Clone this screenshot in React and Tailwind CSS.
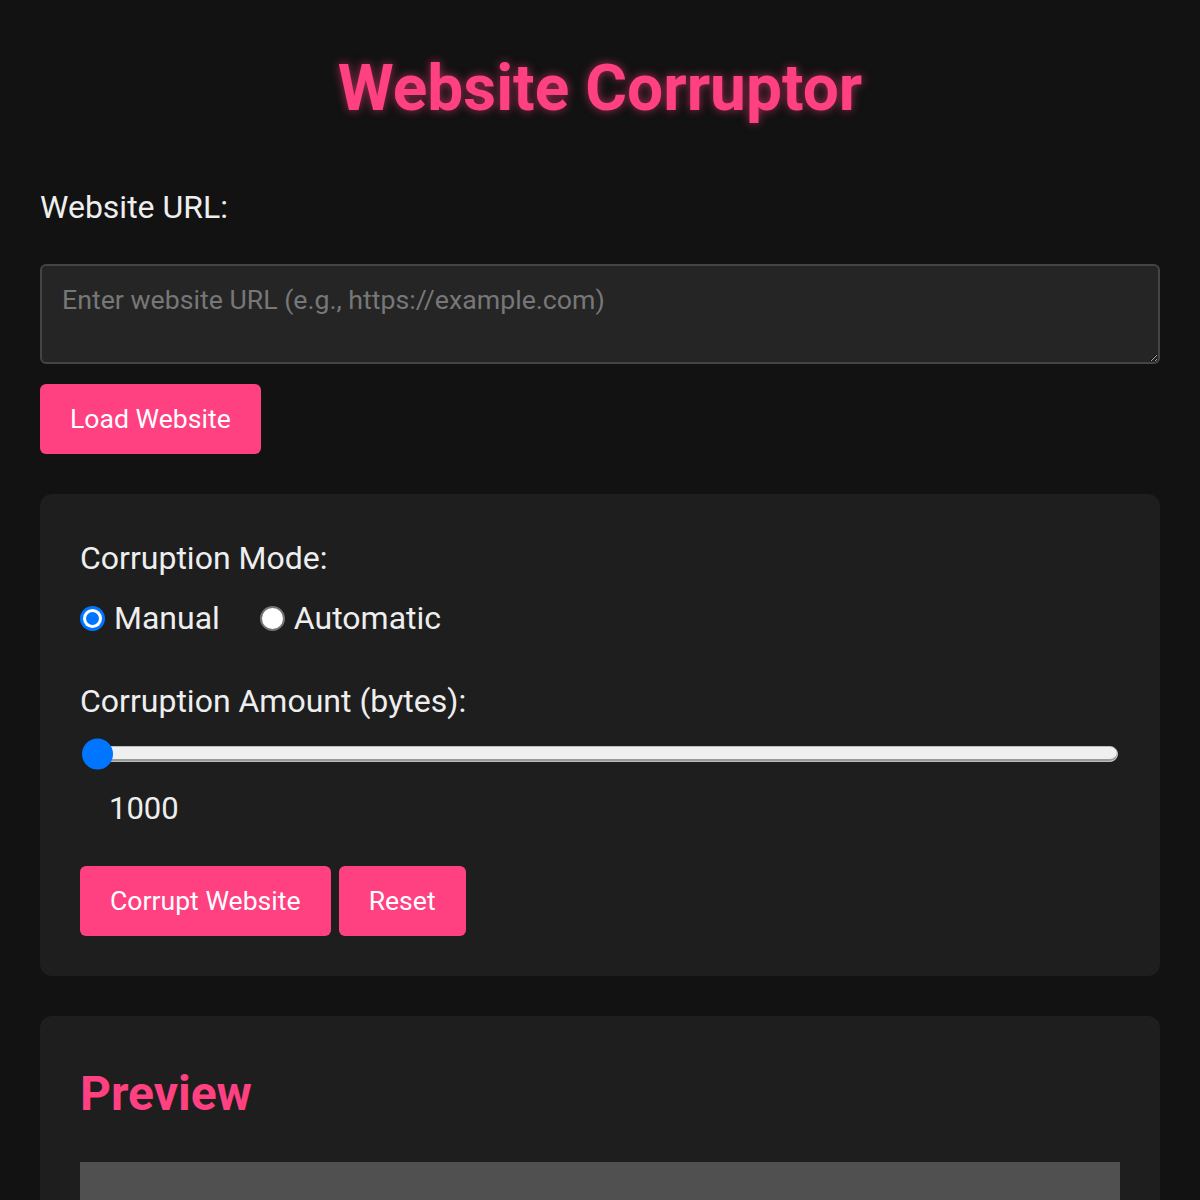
import { useState } from "react";

const PINK = "bg-[#ff4081]";

function Radio({ checked, label, onClick }) {
  return (
    <button type="button" onClick={onClick} className="flex items-center gap-[9px]">
      {checked ? (
        <span className="w-[25px] h-[25px] rounded-full bg-[#0075ff] flex items-center justify-center">
          <span className="w-[19px] h-[19px] rounded-full bg-white flex items-center justify-center">
            <span className="w-[13px] h-[13px] rounded-full bg-[#0075ff]"></span>
          </span>
        </span>
      ) : (
        <span className="w-[25px] h-[25px] rounded-full bg-white border-2 border-[#767676]"></span>
      )}
      <span className="text-[32px] text-[#eeeeee]">{label}</span>
    </button>
  );
}

export default function App() {
  const [mode, setMode] = useState("manual");
  const [amount] = useState(1000);

  return (
    <div className="min-h-screen bg-[#121212] px-10 font-['Roboto','Liberation_Sans',sans-serif] text-[#eeeeee]">
      {/* header */}
      <h1 className="pt-[57px] text-center text-[64px] leading-[64px] font-bold text-[#ff4081] [text-shadow:0_0_10px_rgba(255,64,129,0.6)]">
        Website Corruptor
      </h1>

      <label className="block mt-[70px] text-[32px] leading-[32px]">Website URL:</label>

      <textarea
        placeholder="Enter website URL (e.g., https://example.com)"
        className="block w-full mt-[41px] h-[100px] rounded-[6px] border-2 border-[#444444] bg-[#252525] px-[20px] py-[17px] text-[26.7px] leading-[34px] text-[#eeeeee] placeholder:text-[#777777] outline-none [color-scheme:dark]"
      ></textarea>

      <button className={`mt-[20px] h-[70px] px-[30px] rounded-[6px] ${PINK} text-white text-[26.6px]`}>
        Load Website
      </button>

      {/* controls */}
      <div className="mt-[40px] rounded-[12px] bg-[#1e1e1e] p-10">
        <div className="h-[48px] flex items-center text-[32px]">Corruption Mode:</div>
        <div className="mt-[12px] h-[48px] flex items-center gap-[40px]">
          <Radio checked={mode === "manual"} label="Manual" onClick={() => setMode("manual")} />
          <Radio checked={mode === "automatic"} label="Automatic" onClick={() => setMode("automatic")} />
        </div>

        <div className="mt-[35px] h-[48px] flex items-center text-[32px]">Corruption Amount (bytes):</div>

        <div className="mt-[13px] h-[32px] flex items-center pr-[2px]">
          <div className="relative w-full h-[16px] ml-[4px] rounded-full bg-[#efefef] border border-[#bdbdbd] shadow-[inset_0_-2px_0_#9a9a9a]">
            <span className="absolute -left-[3px] top-1/2 -translate-y-1/2 w-[31px] h-[31px] rounded-full bg-[#0075ff]"></span>
          </div>
        </div>

        <div className="mt-[19px] h-[40px] flex items-center pl-[29px] text-[31px]">{amount}</div>

        <div className="mt-[37px] flex gap-[8px]">
          <button className={`h-[70px] px-[30px] rounded-[6px] ${PINK} text-white text-[26.6px]`}>
            Corrupt Website
          </button>
          <button className={`h-[70px] px-[30px] rounded-[6px] ${PINK} text-white text-[26.6px]`}>
            Reset
          </button>
        </div>
      </div>

      {/* preview */}
      <div className="mt-[40px] rounded-[12px] bg-[#1e1e1e] px-10 pt-[50px] pb-10">
        <h2 className="text-[48px] leading-[56px] font-bold text-[#ff4081]">Preview</h2>
        <div className="mt-[40px] h-[500px] bg-[#505050]"></div>
      </div>
    </div>
  );
}
